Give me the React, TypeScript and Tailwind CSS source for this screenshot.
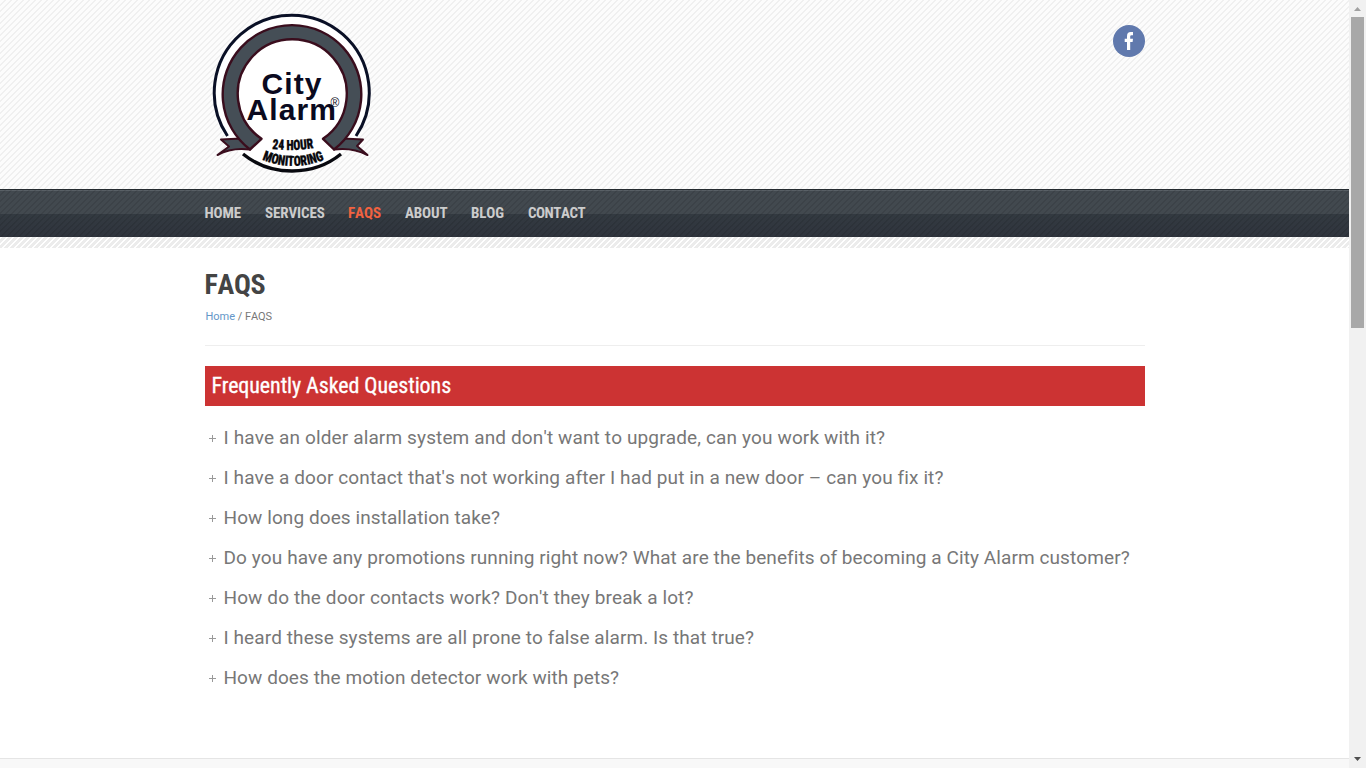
import { ReactNode } from 'react';

const NAV: { label: string; w: string; track: string; active?: boolean }[] = [
  { label: 'HOME', w: 'w-[60px]', track: 'tracking-[-0.15px]' },
  { label: 'SERVICES', w: 'w-[83px]', track: 'tracking-[-0.1px]' },
  { label: 'FAQS', w: 'w-[57px]', track: 'tracking-[-0.05px]', active: true },
  { label: 'ABOUT', w: 'w-[66px]', track: 'tracking-[-0.15px]' },
  { label: 'BLOG', w: 'w-[57px]', track: 'tracking-[-0.15px]' },
  { label: 'CONTACT', w: 'w-[60px]', track: 'tracking-[-0.5px]' },
];

const QUESTIONS = [
  { text: "I have an older alarm system and don't want to upgrade, can you work with it?", track: 'tracking-[0.13px]' },
  { text: "I have a door contact that's not working after I had put in a new door – can you fix it?", track: 'tracking-[0.11px]' },
  { text: 'How long does installation take?', track: 'tracking-[0.08px]' },
  { text: 'Do you have any promotions running right now? What are the benefits of becoming a City Alarm customer?', track: 'tracking-[0.085px]' },
  { text: "How do the door contacts work? Don't they break a lot?", track: 'tracking-[0.11px]' },
  { text: 'I heard these systems are all prone to false alarm. Is that true?', track: 'tracking-[0.085px]' },
  { text: 'How does the motion detector work with pets?', track: 'tracking-[0.07px]' },
];

const COND = "font-['Roboto_Condensed',Roboto,sans-serif] [font-stretch:75%]";

function Condensed({ className, children }: { className: string; children: ReactNode }) {
  return <span className={`${COND} block whitespace-nowrap ${className}`}>{children}</span>;
}

function Logo() {
  return (
    <svg className="block" width="180" height="180" viewBox="200 0 180 180">
      <circle cx="291.500" cy="93.5" r="79" fill="#fff" />
      <path d="M227.500 136 A77.5 77.5 0 1 1 356 136" fill="none" stroke="#0a1026" strokeWidth="3" />
      <path d="M243 154 Q264 171 292 171 Q320 171 341 154" fill="none" stroke="#08090f" strokeWidth="3.4" />
      <g fill="#454e56" stroke="#3a0d1d" strokeWidth="2.4" strokeLinejoin="round">
        <path d="M241 138.500 L221 139.500 L229 146.500 L217.500 155 Q232 147 250 149.500 Z" strokeWidth="2" />
        <path d="M343 138.500 L363 139.500 L357 146 L367.500 155 Q352 147 334 149.500 Z" strokeWidth="2" />
        <path d="M250 149.500 A69.300 69.300 0 1 1 334 149.500 L323 138.800 A54.500 54.500 0 1 0 261.500 138.800 Z" />
      </g>
      <g fill="#0a0a20" fontFamily="Liberation Sans, Arial, sans-serif" fontWeight="700">
        <text x="261.500" y="93.500" fontSize="30" textLength="60">City</text>
        <text x="246.500" y="120" fontSize="30" textLength="89.500">Alarm</text>
        <text x="330.500" y="106.500" fontSize="12" fontWeight="400">®</text>
      </g>
      <g fill="#08080c" stroke="#08080c" strokeWidth="0.3" fontFamily="Roboto, sans-serif" fontWeight="900">
        <path id="arc1" d="M272 149 Q293 151.500 315 148" fill="none" stroke="none" />
        <path id="arc2" d="M262 159.500 Q293 172.500 325 159.500" fill="none" stroke="none" />
        <text fontSize="14" fontStretch="75%"><textPath href="#arc1" textLength="42" lengthAdjust="spacingAndGlyphs">24 HOUR</textPath></text>
        <text fontSize="14" fontStretch="75%"><textPath href="#arc2" textLength="64" lengthAdjust="spacingAndGlyphs">MONITORING</textPath></text>
      </g>
    </svg>
  );
}

export default function App() {
  return (
    <div className="flex h-[768px] w-[1366px] overflow-hidden bg-white font-['Roboto',sans-serif]">
      <div className="flex w-[1349px] flex-col">
        <header className="h-[189px] bg-[#fcfcfc] bg-[repeating-linear-gradient(135deg,transparent_0px,transparent_3px,#f0f0f0_3px,#f0f0f0_4.243px)]">
          <div className="ml-[205px] flex h-full w-[940px] justify-between">
            <div className="-ml-[5px]"><Logo /></div>
            <svg className="mt-[25px]" width="32" height="32" viewBox="0 0 32 32">
              <circle cx="16" cy="16" r="16" fill="#6079ad" />
              <path d="M14 25V17H11.700V13.800H14V11.200Q14 7 17.800 7H20V10.200H18.500Q17.200 10.200 17.200 11.500V13.800H20L19.600 17H17.200V25Z" fill="#fff" />
            </svg>
          </div>
        </header>
        <nav className="h-12 border-t border-[#252b30] bg-[repeating-linear-gradient(135deg,transparent_0px,transparent_3px,#00000018_3px,#00000018_4.243px),linear-gradient(#596066_0px,#596066_1px,#42494f_1px,#42494f_24px,#333a41_24px,#2f343d_47px)]">
          <ul className="ml-[205px] flex pt-[11px]">
            {NAV.map((n) => (
              <li key={n.label} className={n.w}>
                <Condensed className={`text-[15px] leading-6 font-bold [font-kerning:none] ${n.track} ${n.label === 'HOME' ? '-ml-[0.5px]' : ''} ${n.active ? 'text-[#f26240]' : 'text-[#cccccc]'}`}>{n.label}</Condensed>
              </li>
            ))}
          </ul>
        </nav>
        <div className="h-[11px] bg-[repeating-linear-gradient(135deg,#fff_0px,#fff_2px,#ececec_2px,#ececec_4.243px)]" />
        <main className="ml-[205px] h-[510px] w-[940px]">
          <h1 className="pt-[19px]"><Condensed className="-ml-[0.5px] text-[28px] leading-9 font-bold tracking-[-0.3px] text-[#444] [font-kerning:none]">FAQS</Condensed></h1>
          <p className="h-[43px] border-b border-[#eee] pt-[6px] pl-[0.5px] text-[11px] leading-4 tracking-[-0.03px] text-[#777] [font-kerning:none]"><span className="text-[#6496c8]">Home</span> / FAQS</p>
          <h2 className="mt-5 h-10 bg-[#cc3333] pl-[6.5px]"><Condensed className="text-[22px] leading-[39px] font-normal tracking-[-0.08px] text-white [-webkit-text-stroke:0.3px_white]">Frequently Asked Questions</Condensed></h2>
          <ul className="mt-3">
            {QUESTIONS.map((q) => (
              <li key={q.text} className="flex h-10 items-center pl-1">
                <svg width="7" height="7" className="mr-[7.5px] shrink-0" viewBox="0 0 7 7"><path d="M0 3.500H7M3.500 0V7" stroke="#999" /></svg>
                <span className={`text-[19px] whitespace-nowrap text-[#777] [font-kerning:none] ${q.track}`}>{q.text}</span>
              </li>
            ))}
          </ul>
        </main>
        <footer className="h-[10px] border-t border-[#e5e5e5] bg-[#f8f8f8]" />
      </div>
      <aside className="flex w-[17px] flex-col items-center bg-[#f1f1f1]">
        <svg width="17" height="17" viewBox="0 0 17 17"><path d="M5 11L8.500 7L12 11Z" fill="#a0a0a0" /></svg>
        <div className="h-[311px] w-[13px] bg-[#a8a8a8]" />
        <svg className="mt-auto" width="17" height="17" viewBox="0 0 17 17"><path d="M5 6L8.500 10L12 6Z" fill="#505050" /></svg>
      </aside>
    </div>
  );
}
